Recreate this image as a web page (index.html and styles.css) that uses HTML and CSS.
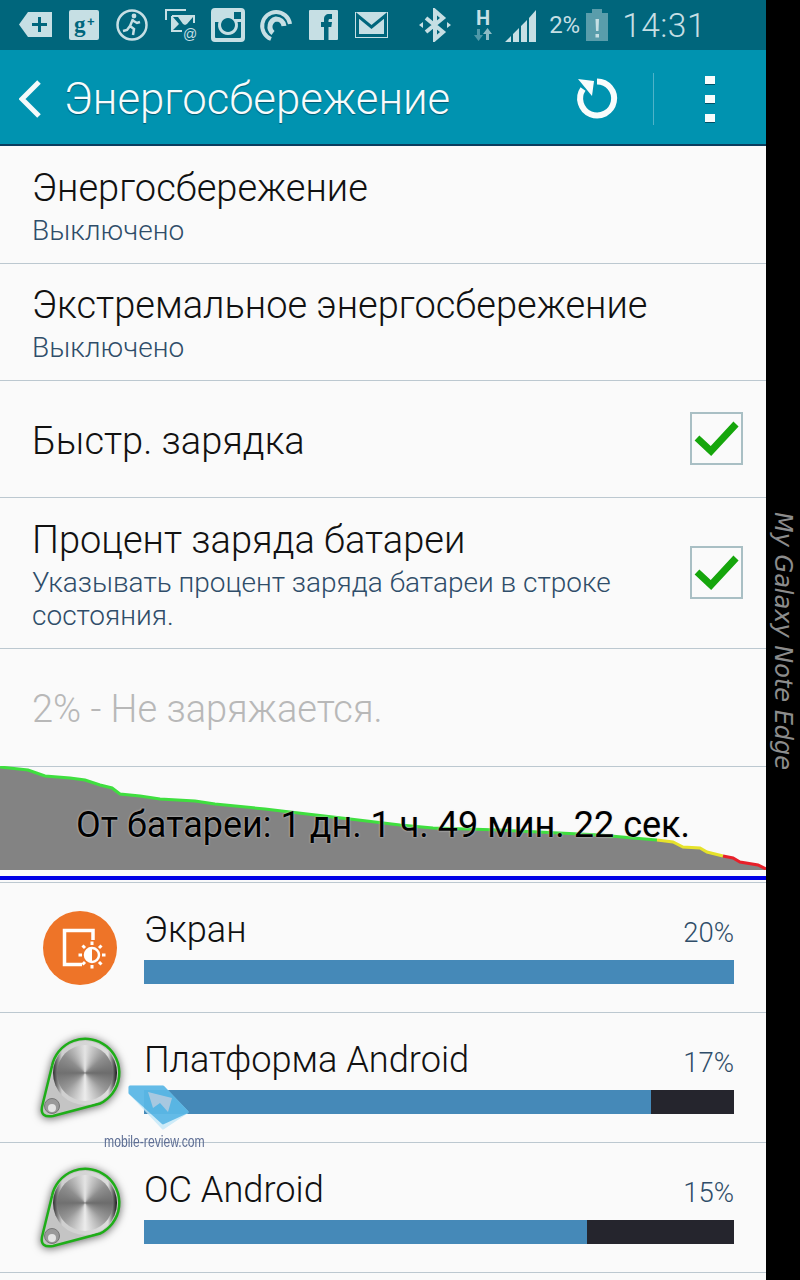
FILE: index.html
```html
<!DOCTYPE html>
<html lang="ru">
<head>
  <meta charset="UTF-8" />
  <meta name="viewport" content="width=device-width, initial-scale=1.0" />
  <title>Энергосбережение</title>
  <link rel="stylesheet" href="styles.css">
</head>
<body>
  <div class="screen">
    <div class="phone">
      <div class="status-bar">
        <div class="status-apps">
          <svg width="33" height="26" viewBox="0 0 33 26"><path class="ico" d="M9 0H33V25H9L0 12.5Z"/><path class="cut" d="M19 5h3v6h6v3h-6v6h-3v-6h-6v-3h6z"/></svg>
          <svg width="30" height="30" viewBox="0 0 30 30"><rect class="ico" width="30" height="30" rx="2"/><text class="glyph" x="5" y="22">g</text><text class="glyph-sm" x="18" y="16">+</text></svg>
          <svg width="32" height="32" viewBox="0 0 32 32"><circle class="ring" cx="16" cy="16" r="14.500"/><circle class="ico" cx="18" cy="7" r="2.400"/><path class="limb" d="M17 10l-3 7 4 3-1 6M14 17l-3 4-4 1M16 11l5 3 3-1"/></svg>
          <svg width="34" height="34" viewBox="0 0 34 34"><path class="thin" d="M1 12V2h20M7 8h22v7M7 8v15h10"/><path class="ico" d="M8 9l6 7-6 6zM13 9h15l-6 7-2 1-2-1z"/><text class="at" x="18" y="31">@</text></svg>
          <svg class="tighter" width="34" height="34" viewBox="0 0 34 34"><path class="ico" fill-rule="evenodd" d="M4 0H30a4 4 0 0 1 4 4V30a4 4 0 0 1-4 4H4a4 4 0 0 1-4-4V4a4 4 0 0 1 4-4ZM23 4v7h7V4ZM4 14V29a1 1 0 0 0 1 1H29a1 1 0 0 0 1-1V14H26.500a10 10 0 1 1-19 0ZM17 10a7 7 0 1 0 .01 0Z"/></svg>
          <svg class="tight" width="33" height="33" viewBox="0 0 33 33"><path class="arc" d="M31 15A14 14 0 0 0 17 3 14 14 0 0 0 12 30"/><path class="arc arc-in" d="M25 17A8 8 0 0 0 17 10 8 8 0 0 0 14 24"/></svg>
          <svg width="29" height="30" viewBox="0 0 29 30"><rect class="ico" width="29" height="30" rx="1"/><path class="cut" d="M15 30V17h-3v-5h3V9c0-3 2-5 5-5h3v5h-2c-1 0-1.500.5-1.500 1.500V12H23l-.7 5h-2.800v13z"/></svg>
          <svg width="33" height="26" viewBox="0 0 33 26"><rect class="ico" width="33" height="26"/><path class="cut-line" d="M2.500 3.500V23.500H30.500V3.500L16.500 15Z"/></svg>
        </div>
        <div class="status-sys">
          <svg class="bt" width="32" height="34" viewBox="0 0 32 34"><path class="bt-line" d="M7 10L24 24 16 31V3L24 10 7 24"/><path class="ico" d="M0 17l4-3v6zM32 17l-4-3v6z"/></svg>
          <div class="net">
            <span class="net-h">H</span>
            <svg width="18" height="13" viewBox="0 0 18 13"><path class="dim" d="M3 1h3v6h3l-4.500 6L0 7h3z"/><path class="ico-soft" d="M13.500 0L18 6h-3v6h-3V6H9z"/></svg>
          </div>
          <svg class="signal" width="32" height="33" viewBox="0 0 32 33"><path class="ico" d="M0 33l6-6v6zM8 33V25l6-6V33zM16 33V17l6-6V33zM24 33V9l7-8V33z"/></svg>
          <span class="batt-pct">2%</span>
          <svg class="batt" width="22" height="33" viewBox="0 0 22 33"><path class="batt-body" d="M0 4H6V0H16V4H22V32H0Z"/><path class="ico" d="M9.500 10h3.500l-.5 12h-2.500zM9.500 25h3.500v3.500h-3.500z"/></svg>
          <span class="clock">14:31</span>
        </div>
      </div>

      <div class="action-bar">
        <svg class="back" width="22" height="38" viewBox="0 0 22 38"><path d="M20 2L3 19 20 36"/></svg>
        <h1 class="screen-title">Энергосбережение</h1>
        <svg class="refresh" width="44" height="44" viewBox="0 0 44 44"><path d="M22 4.500A17 17 0 1 1 8 12"/><polygon points="3,2 19,4 17,19"/></svg>
        <span class="bar-divider"></span>
        <div class="more"><i></i><i></i><i></i></div>
      </div>

      <div class="row row-first">
        <div class="row-title">Энергосбережение</div>
        <div class="row-sub">Выключено</div>
      </div>
      <div class="row">
        <div class="row-title">Экстремальное энергосбережение</div>
        <div class="row-sub">Выключено</div>
      </div>
      <div class="row row-check">
        <div class="row-text">
          <div class="row-title">Быстр. зарядка</div>
        </div>
        <div class="checkbox"><svg width="46" height="38" viewBox="0 0 46 38"><path d="M3 19l14 13L42 5"/></svg></div>
      </div>
      <div class="row row-check row-tall">
        <div class="row-text">
          <div class="row-title">Процент заряда батареи</div>
          <div class="row-sub row-sub-wrap">Указывать процент заряда батареи в строке состояния.</div>
        </div>
        <div class="checkbox"><svg width="46" height="38" viewBox="0 0 46 38"><path d="M3 19l14 13L42 5"/></svg></div>
      </div>
      <div class="row row-first row-status">2% - Не заряжается.</div>

      <div class="graph">
        <svg width="766" height="104" viewBox="0 0 766 104">
          <path class="graph-fill" d="M0 1L28 4 45 10 70 12 85 14 100 19 112 22 120 28 140 30 160 33 195 35 215 38 265 43 290 46 350 53 400 59 433 62 500 64 600 69 633 72 657 74 673 76 683 81 700 82 707 86 723 90 733 92 740 96 758 99 766 103V104H0Z"/>
          <path class="line-green" d="M0 1L28 4 45 10 70 12 85 14 100 19 112 22 120 28 140 30 160 33 195 35 215 38 265 43 290 46 350 53 400 59 433 62 500 64 600 69 633 72 657 74"/>
          <path class="line-yellow" d="M657 74L673 76 683 81 700 82 707 86 723 90"/>
          <path class="line-red" d="M723 90L733 92 740 96 758 99 766 103"/>
        </svg>
        <div class="graph-label">От батареи: 1 дн. 1 ч. 49 мин. 22 сек.</div>
      </div>
      <div class="graph-rule"></div>

      <div class="usage">
        <div class="app-icon">
          <svg width="74" height="74" viewBox="0 0 74 74">
            <circle cx="37" cy="37" r="37" fill="#ee7428"/>
            <path class="scr-line" d="M50 29V19.500H21.500V53.500H39"/>
            <circle class="sun" cx="49" cy="44" r="7"/>
            <path class="sun-half" d="M49 37a7 7 0 0 0 0 14z"/>
            <path class="scr-rays" d="M49 34v-3.500M49 54v3.500M39 44h-3.500M59 44h3.500M42 37l-2.500-2.500M56 37l2.500-2.500M42 51l-2.500 2.500M56 51l2.500 2.500"/>
          </svg>
        </div>
        <div class="usage-body">
          <div class="usage-head"><span class="usage-name">Экран</span><span class="usage-pct">20%</span></div>
          <div class="usage-track"><div class="usage-fill" style="width:100%"></div></div>
        </div>
      </div>
      <div class="usage">
        <div class="app-icon knob">
          <svg width="74" height="74" viewBox="0 0 74 74"><path class="knob-shape" d="M9 25A34 34 0 1 1 57 62.500L10 75Q-3 77-1 66Z"/><circle class="knob-bead" cx="9" cy="65" r="7.500"/><circle class="knob-bead-hi" cx="9" cy="67" r="4"/></svg>
          <div class="knob-disc"></div>
        </div>
        <div class="usage-body">
          <div class="usage-head"><span class="usage-name">Платформа Android</span><span class="usage-pct">17%</span></div>
          <div class="usage-track"><div class="usage-fill" style="width:86%"></div></div>
        </div>
      </div>
      <div class="usage">
        <div class="app-icon knob">
          <svg width="74" height="74" viewBox="0 0 74 74"><path class="knob-shape" d="M9 25A34 34 0 1 1 57 62.500L10 75Q-3 77-1 66Z"/><circle class="knob-bead" cx="9" cy="65" r="7.500"/><circle class="knob-bead-hi" cx="9" cy="67" r="4"/></svg>
          <div class="knob-disc"></div>
        </div>
        <div class="usage-body">
          <div class="usage-head"><span class="usage-name">ОС Android</span><span class="usage-pct">15%</span></div>
          <div class="usage-track"><div class="usage-fill" style="width:75%"></div></div>
        </div>
      </div>

      <div class="watermark">
        <svg width="66" height="46" viewBox="0 0 66 46"><path class="wm-back" d="M5 9L38 44 62 28 38 3H5Z"/><path class="wm-front" d="M5 3H38L62 28 38 39 5 9Z"/><path class="wm-arrow" d="M23 8L47 14 43 28 35 19 28 24Z"/></svg>
        <span class="wm-text">mobile-review.com</span>
      </div>
    </div>

    <div class="edge"><span class="edge-text">My Galaxy Note Edge</span></div>
  </div>
</body>
</html>
```

FILE: styles.css
```css
html, body {
  margin: 0;
  padding: 0;
  background-color: #000;
}

.screen {
  display: flex;
  width: 800px;
  height: 1280px;
  overflow: hidden;
  font-family: Roboto, "Noto Sans", sans-serif;
}

.phone {
  position: relative;
  width: 766px;
  height: 1280px;
  flex: none;
  background-color: #fafafa;
}

/* status bar */
.status-bar {
  display: flex;
  align-items: center;
  justify-content: space-between;
  height: 50px;
  padding: 0 60px 0 19px;
  background-color: #00667c;
}

.status-apps {
  display: flex;
  align-items: center;
  gap: 17px;
}

.status-apps .tight {
  margin-left: -3px;
}

.status-apps .tighter {
  margin-left: -5px;
}

.status-sys {
  display: flex;
  align-items: center;
}

.ico { fill: #c6dfe4; }
.ico-soft { fill: #8fbcc6; }
.dim { fill: #4f98a8; }
.cut { fill: #00667c; }
.cut-line { fill: none; stroke: #00667c; stroke-width: 3; }
.ring { fill: none; stroke: #c6dfe4; stroke-width: 2.500; }
.limb { fill: none; stroke: #c6dfe4; stroke-width: 2.500; }
.thin { fill: none; stroke: #c6dfe4; stroke-width: 2; }
.arc { fill: none; stroke: #c6dfe4; stroke-width: 4; }
.arc-in { stroke-width: 5; }

.glyph {
  font: bold 23px "Liberation Serif", serif;
  fill: #00667c;
}

.glyph-sm {
  font: bold 13px "Liberation Sans", sans-serif;
  fill: #00667c;
}

.at {
  font: 14px "Liberation Sans", sans-serif;
  fill: #c6dfe4;
}

.bt { margin-right: 23px; }
.bt-line { fill: none; stroke: #c6dfe4; stroke-width: 4; }

.net {
  display: flex;
  flex-direction: column;
  align-items: center;
  width: 18px;
  margin-right: 13px;
}

.net-h {
  font: bold 20px/19px Roboto, sans-serif;
  color: #c6dfe4;
}

.signal { margin-right: 12px; }

.batt-pct {
  width: 31px;
  margin-right: 6px;
  font-size: 24px;
  color: #c6dfe4;
}

.batt { margin-right: 14px; }
.batt-body { fill: #5a9dab; }

.clock {
  font-size: 33.500px;
  font-weight: 300;
  letter-spacing: 0.5px;
  color: #c6dfe4;
}

/* action bar */
.action-bar {
  display: flex;
  align-items: center;
  height: 96px;
  padding: 3px 0 0 19px;
  box-sizing: border-box;
  background-color: #0093b0;
  border-bottom: 2px solid #0b3d5e;
}

.back {
  flex: none;
  margin-right: 23px;
}

.back path {
  fill: none;
  stroke: #f4fafb;
  stroke-width: 5;
}

.screen-title {
  flex: 1;
  margin: 0;
  font-size: 43.700px;
  font-weight: 300;
  white-space: nowrap;
  color: #f6fbfc;
  text-shadow: 0 1px 1px rgba(0, 50, 70, 0.6);
}

.refresh {
  flex: none;
  margin-right: 34px;
}

.refresh path {
  fill: none;
  stroke: #f8fcfc;
  stroke-width: 6;
}

.refresh polygon { fill: #f8fcfc; }

.bar-divider {
  width: 1px;
  height: 52px;
  flex: none;
  background-color: #4fb3c8;
}

.more {
  display: flex;
  flex-direction: column;
  gap: 11px;
  margin: 0 51px;
}

.more i {
  display: block;
  width: 10px;
  height: 8px;
  background-color: #f8fcfc;
  box-shadow: 0 1px 0 rgba(0, 50, 70, 0.7);
}

/* settings rows */
.row {
  display: flex;
  flex-direction: column;
  justify-content: center;
  height: 117px;
  padding: 3px 23px 0 32px;
  box-sizing: border-box;
  border-bottom: 1px solid #bcc8d0;
}

.row-first { height: 118px; }

.row-check {
  flex-direction: row;
  align-items: center;
  justify-content: space-between;
  padding-top: 0;
  padding-bottom: 2px;
}

.row-text { padding-top: 5px; }

.row-tall { height: 151px; }

.row-title {
  font-size: 38px;
  font-weight: 300;
  line-height: 44px;
  color: #111;
}

.row-sub {
  margin-top: 4px;
  font-size: 28px;
  font-weight: 300;
  line-height: 33px;
  color: #2f4d69;
}

.row-sub-wrap { width: 620px; }

.row-status {
  font-size: 38px;
  font-weight: 300;
  color: #b8b8b8;
}

.checkbox {
  display: flex;
  align-items: center;
  justify-content: center;
  width: 49px;
  height: 49px;
  flex: none;
  border: 2px solid #a9bfc4;
}

.checkbox path {
  fill: none;
  stroke: #16a60c;
  stroke-width: 7;
}

/* battery graph */
.graph {
  position: relative;
  height: 104px;
  margin-top: -1px;
}

.graph svg { display: block; }

.graph-fill { fill: #838383; }
.line-green { fill: none; stroke: #3fdf3f; stroke-width: 3; }
.line-yellow { fill: none; stroke: #e6e22a; stroke-width: 3; }
.line-red { fill: none; stroke: #e8202a; stroke-width: 3; }

.graph-label {
  position: absolute;
  top: 37px;
  left: 0;
  right: 0;
  text-align: center;
  font-size: 36px;
  line-height: 44px;
  color: #000;
  text-shadow: 0 0 2px #ddd;
}

.graph-rule {
  height: 4px;
  margin-top: 6px;
  padding-bottom: 2px;
  background-color: #0000e6;
  background-clip: content-box;
  border-bottom: 1px solid #bcc8d0;
}

/* usage list */
.usage {
  display: flex;
  align-items: center;
  height: 129px;
  padding-left: 43px;
  border-bottom: 1px solid #bcc8d0;
}

.app-icon {
  position: relative;
  width: 74px;
  height: 74px;
  flex: none;
  margin-right: 27px;
}

.app-icon svg {
  display: block;
  overflow: visible;
}

.scr-line {
  fill: none;
  stroke: #fff;
  stroke-width: 3.500;
}

.sun {
  fill: #ee7428;
  stroke: #fff;
  stroke-width: 2.500;
}

.sun-half { fill: #fff; }

.scr-rays {
  fill: none;
  stroke: #fff;
  stroke-width: 3;
}

.knob-shape {
  fill: #c4c4c4;
  stroke: #1eae18;
  stroke-width: 2.500;
  filter: drop-shadow(0 1px 4px rgba(0, 0, 0, 0.6));
}

.knob-bead {
  fill: #9a9a9a;
  stroke: #777;
  stroke-width: 1;
}

.knob-bead-hi { fill: #e4e4e4; }

.knob-disc {
  position: absolute;
  top: 0;
  left: 10px;
  width: 64px;
  height: 64px;
  border-radius: 50%;
  background: linear-gradient(90deg, #2e2e2e, #cfcfcf 14%, #dcdcdc 86%, #161616);
}

.knob-disc::after {
  content: "";
  position: absolute;
  inset: 4px;
  border-radius: 50%;
  background: conic-gradient(#e4e4e4, #8e8e8e 14%, #6c6c6c 25%, #989898 36%, #ececec 50%, #989898 64%, #707070 75%, #8e8e8e 86%, #e4e4e4);
}

.usage-body {
  width: 590px;
  flex: none;
}

.usage-head {
  display: flex;
  align-items: baseline;
  justify-content: space-between;
  height: 38px;
  margin-bottom: 11px;
  line-height: 38px;
}

.usage-name {
  font-size: 36.200px;
  font-weight: 300;
  color: #111;
}

.usage-pct {
  font-size: 27.500px;
  font-weight: 300;
  color: #2f4d69;
}

.usage-track {
  height: 24px;
  background-color: #25252d;
}

.usage-fill {
  height: 100%;
  background-color: #4589b8;
}

/* watermark */
.watermark {
  position: absolute;
  top: 1084px;
  left: 104px;
  width: 110px;
}

.watermark svg {
  display: block;
  margin-left: 21px;
  overflow: visible;
}

.wm-back { fill: #c4e8f8; opacity: 0.8; stroke: #c4e8f8; stroke-width: 3; stroke-linejoin: round; }
.wm-front { fill: #38a8e0; opacity: 0.7; stroke: #38a8e0; stroke-width: 3; stroke-linejoin: round; }
.wm-arrow { fill: #a8c8e0; }

.wm-text {
  display: block;
  margin-top: 4px;
  font: 16px/16px "Liberation Sans", sans-serif;
  color: #5e6e94;
  white-space: nowrap;
  transform: scaleX(0.76);
  transform-origin: left center;
}

/* black curved edge */
.edge {
  flex: 1;
  padding-top: 512px;
}

.edge-text {
  display: block;
  writing-mode: vertical-rl;
  margin-left: 3px;
  font-family: "DejaVu Sans", sans-serif;
  font-size: 24px;
  font-style: italic;
  color: #8c8c8c;
  white-space: nowrap;
}
```
